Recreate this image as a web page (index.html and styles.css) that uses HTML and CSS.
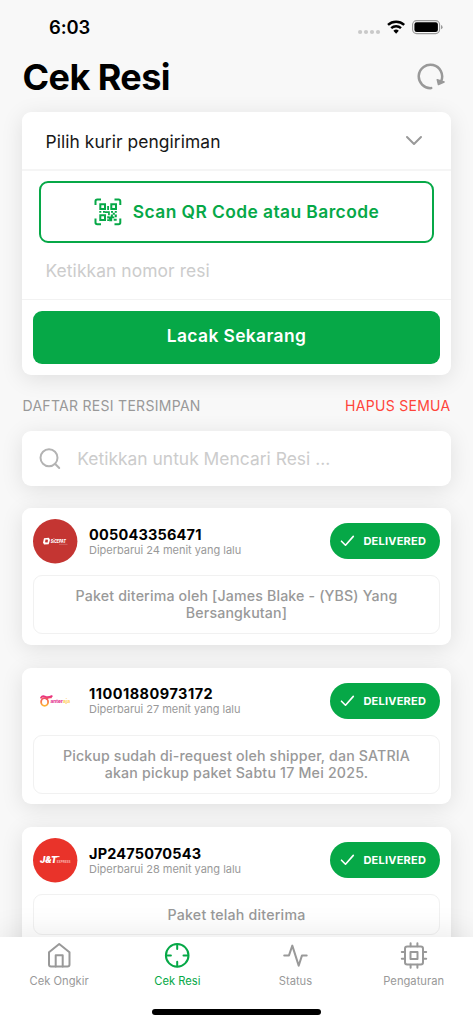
FILE: index.html
```html
<!DOCTYPE html>
<html lang="id">
<head>
<meta charset="utf-8">
<title>Cek Resi</title>
<link rel="stylesheet" href="styles.css">
</head>
<body>
<div class="screen">
  <header class="status-bar">
    <span class="clock">6:03</span>
    <svg class="system-icons" width="86" height="18" viewBox="0 0 86 18">
      <g fill="#c9c9c9"><circle cx="2.1" cy="14" r="2.1"/><circle cx="8" cy="14" r="2.1"/><circle cx="14" cy="14" r="2.1"/><circle cx="20" cy="14" r="2.1"/></g>
      <g fill="none" stroke="#000" stroke-width="2.4"><path d="M30 6.9a12 12 0 0 1 16.2 0"/><path d="M33.2 10.2a7.2 7.2 0 0 1 9.8 0"/></g>
      <path d="M35.4 12.7a4 4 0 0 1 5.4 0L38.1 15.8Z"/>
      <rect x="54.6" y="2.6" width="27" height="13" rx="4" fill="none" stroke="#999" stroke-width="1.1"/>
      <rect x="56.4" y="4.3" width="23.5" height="9.7" rx="2.3"/>
      <path d="M83 7v4.3q1.6-.6 1.6-2.15T83 7Z" fill="#999"/>
    </svg>
  </header>
  <div class="title-row">
    <h1>Cek Resi</h1>
    <svg width="28" height="28" viewBox="0 0 28 28" fill="none" stroke="#999" stroke-width="2.5" stroke-linecap="round" stroke-linejoin="round">
      <path d="M14.2 25.1A11.7 11.7 0 1 1 24.3 17.8"/><path d="M20.2 16.6l6.9 2.4-5.7 2.6z" fill="#999" stroke-width="1.4"/>
    </svg>
  </div>

  <section class="card form">
    <div class="courier"><span>Pilih kurir pengiriman</span>
      <svg width="18" height="12" viewBox="0 0 18 12" fill="none" stroke="#999" stroke-width="2" stroke-linecap="round" stroke-linejoin="round"><path d="M2 2l7 7 7-7"/></svg>
    </div>
    <div class="scan">
      <svg width="28" height="28" viewBox="0 0 28 28" fill="none" stroke="#06a847" stroke-width="2">
        <path d="M1.5 7V3.2q0-1.7 1.7-1.7H7M20.5 1.5h4.1q1.7 0 1.7 1.7V7M1.5 20.5v4.1q0 1.7 1.7 1.7H7M20.5 26.3h4.1q1.7 0 1.7-1.7v-4.1"/>
        <path d="M6.3 6.3h4.7V11H6.3zM17.3 6.3H22V11h-4.7zM6.3 17.3H11V22H6.3z"/>
        <path fill="#06a847" stroke="none" d="M13.2 8h1.8v4h-1.8zM5.3 13h2v1.8h-2zM9 13h2v1.8H9zM11 13.2h4.8v4h-1.7V15H11zM17 13h2v1.8h-2zM20.8 13h2v1.8h-2zM18.8 14.8h2v2h-2zM16.8 16.5h2.1v2h-2.1zM20.7 16.5h2.1v2.7h-2.1zM13.2 18.2h1.9v2.3h-1.9zM15 18.5h5.3v1.7h-2.1v3h-3.1v-2.3H15zM19.7 20.8h3v2h-3zM13.2 21.3H15v1.8h-1.8z"/>
      </svg>
      <span>Scan QR Code atau Barcode</span>
    </div>
    <div class="receipt"><span>Ketikkan nomor resi</span></div>
    <div class="track"><span>Lacak Sekarang</span></div>
  </section>

  <div class="section-head"><span class="saved">DAFTAR RESI TERSIMPAN</span><span class="clear">HAPUS SEMUA</span></div>

  <div class="card search">
    <svg width="22" height="22" viewBox="0 0 22 22" fill="none" stroke="#b3b3b3" stroke-width="2" stroke-linecap="round"><circle cx="10" cy="9.7" r="8.5"/><path d="M16.2 16l4 4"/></svg>
    <span>Ketikkan untuk Mencari Resi ...</span>
  </div>

  <main class="list">
    <article class="card parcel">
      <div class="parcel-head">
        <svg class="logo" viewBox="0 0 45 45"><circle cx="22.2" cy="22.2" r="22.2" fill="#c43532"/>
          <path d="M11 19.2l4.8-.5 1.2 2-1.3 4.5-4.7.2-1-2z" fill="#fff"/><path d="M12.5 20.5l2.5.3-.4 2.7-2.6-.2z" fill="#c43532"/>
          <text x="17.8" y="23.9" class="sicepat" textLength="15" lengthAdjust="spacingAndGlyphs">SiCEPAT</text><path d="M26 25.3h8.5" stroke="#d87978" stroke-width=".7"/></svg>
        <div class="meta"><span class="code code-a">005043356471</span><span class="updated">Diperbarui 24 menit yang lalu</span></div>
        <div class="badge"><svg width="15" height="12" viewBox="0 0 15 12"><path d="M1.5 6.2l4 4L13.3 1.4"/></svg><span>DELIVERED</span></div>
      </div>
      <div class="note"><span class="line-a">Paket diterima oleh [James Blake - (YBS) Yang</span><br><span class="line-b">Bersangkutan]</span></div>
    </article>
    <article class="card parcel">
      <div class="parcel-head">
        <svg class="logo" viewBox="0 0 45 45"><defs><linearGradient id="ribbon" gradientUnits="userSpaceOnUse" x1="0" y1="16" x2="0" y2="28"><stop stop-color="#e5208a"/><stop offset=".5" stop-color="#f7734e"/><stop offset="1" stop-color="#ffc42e"/></linearGradient></defs>
          <g fill="none" stroke="url(#ribbon)" stroke-width="1.8" stroke-linecap="round"><ellipse cx="11.6" cy="23" rx="3.5" ry="3.9"/><path d="M8 18.8q1.2-2.2 3.8-1.2 3 1.4 7-.5M13.6 20q1.5-1.8 4.4-1.6"/></g>
          <text x="17.5" y="24.2" class="anter" textLength="12.5" lengthAdjust="spacingAndGlyphs">anter</text><text x="30" y="24.2" class="aja" textLength="7" lengthAdjust="spacingAndGlyphs">aja</text></svg>
        <div class="meta"><span class="code code-b">11001880973172</span><span class="updated">Diperbarui 27 menit yang lalu</span></div>
        <div class="badge"><svg width="15" height="12" viewBox="0 0 15 12"><path d="M1.5 6.2l4 4L13.3 1.4"/></svg><span>DELIVERED</span></div>
      </div>
      <div class="note"><span class="line-c">Pickup sudah di-request oleh shipper, dan SATRIA</span><br><span class="line-d">akan pickup paket Sabtu 17 Mei 2025.</span></div>
    </article>
    <article class="card parcel">
      <div class="parcel-head">
        <svg class="logo" viewBox="0 0 45 45"><circle cx="22.2" cy="22.2" r="22.2" fill="#e9332a"/>
          <text x="7" y="24.6" class="jt" textLength="17" lengthAdjust="spacingAndGlyphs">J&amp;T</text><path d="M19.5 18.6h7" stroke="#fff"/><text x="23.8" y="24.5" class="express" textLength="13.7" lengthAdjust="spacingAndGlyphs">EXPRESS</text></svg>
        <div class="meta"><span class="code code-c">JP2475070543</span><span class="updated">Diperbarui 28 menit yang lalu</span></div>
        <div class="badge"><svg width="15" height="12" viewBox="0 0 15 12"><path d="M1.5 6.2l4 4L13.3 1.4"/></svg><span>DELIVERED</span></div>
      </div>
      <div class="note"><span class="line-e">Paket telah diterima</span></div>
    </article>
  </main>

  <nav class="tabs">
    <div class="tab"><svg width="28" height="28" viewBox="0 0 28 28"><path d="M4 10.2L14.2 2l10.3 8.2V22.5q0 2-2 2H6q-2 0-2-2z"/><path d="M10.7 24.5V13.3h7v11.2"/></svg><span>Cek Ongkir</span></div>
    <div class="tab active"><svg width="28" height="28" viewBox="0 0 28 28"><circle cx="14.2" cy="13.4" r="11.3"/><path d="M14.2 2.5v4.6M14.2 19.7v4.6M3.3 13.4h4.6M20.5 13.4h4.6"/></svg><span>Cek Resi</span></div>
    <div class="tab"><svg width="28" height="28" viewBox="0 0 28 28"><path d="M3.2 13.4h4.8l3.3-9.8 6.4 20 3.3-10.2h4.7"/></svg><span>Status</span></div>
    <div class="tab"><svg width="28" height="28" viewBox="0 0 28 28"><rect x="5" y="4.5" width="18" height="18" rx="2.2"/><rect x="10.5" y="10" width="7" height="7"/><path d="M10.6 1.2v3M17.4 1.2v3M10.6 22.8v3M17.4 22.8v3M1.8 10.1h3M1.8 16.7h3M23.2 10.1h3M23.2 16.7h3"/></svg><span>Pengaturan</span></div>
    <div class="home-indicator"></div>
  </nav>
</div>
</body>
</html>
```
FILE: styles.css
```css
* { box-sizing: border-box; }
body { margin: 0; }
.screen {
  width: 473px; height: 1024px; overflow: hidden;
  display: flex; flex-direction: column;
  background: #f8f8f8; color: #000;
  font-family: Inter, sans-serif; position: relative;
}
span { white-space: nowrap; }
.status-bar { height: 54px; flex: none; display: flex; justify-content: space-between; padding: 16px 29px 0 49px; }
.clock { font-size: 18.4px; line-height: 23px; font-weight: 600; letter-spacing: -0.1px; }
.system-icons { margin-top: 2px; }
.title-row { height: 58px; flex: none; display: flex; justify-content: space-between; align-items: flex-start; padding: 0 28px 0 22.5px; }
.title-row svg { margin-top: 9px; }
h1 { margin: 0; font-size: 36px; line-height: 46px; font-weight: 700; letter-spacing: -0.57px; }
.card { background: #fff; border-radius: 9px; box-shadow: 0 4px 22px rgba(0,0,0,.1); margin: 0 22.3px; flex: none; }
.form { height: 263px; }
.courier { height: 59px; border-bottom: 2px solid #f5f5f5; display: flex; align-items: center; justify-content: space-between; padding: 1px 28px 0 23.2px; font-size: 17.4px; letter-spacing: 0.07px; }
.courier span { color: #171717; }
.scan { height: 62px; margin: 10px 16.5px 0; border: 2px solid #06a847; border-radius: 9px; display: flex; align-items: center; justify-content: center; gap: 11px; color: #06a847; font-size: 17.4px; font-weight: 600; letter-spacing: 0.42px; }
.scan span { margin-top: -2px; }
.receipt { height: 56.5px; border-bottom: 1px solid #f2f2f2; padding: 0 23.2px; color: #ccc; font-size: 17.4px; line-height: 55px; letter-spacing: 0.09px; }
.track { margin: 11px 11px 0; height: 53px; background: #06a847; border-radius: 9px; color: #fff; font-size: 17.4px; font-weight: 600; line-height: 50px; text-align: center; letter-spacing: 0.38px; }
.section-head { height: 56px; flex: none; display: flex; justify-content: space-between; align-items: center; padding: 5px 22.5px 0; font-size: 14px; letter-spacing: 0.29px; }
.saved { color: #999; }
.clear { color: #ff443a; }
.search { height: 55px; display: flex; align-items: center; padding: 0 17px; gap: 16px; font-size: 17.4px; color: #ccc; letter-spacing: 0.02px; }
.list { display: flex; flex-direction: column; gap: 22.8px; margin-top: 22px; }
.parcel { height: 136.8px; padding: 11px; }
.parcel:last-child { height: 140px; }
.parcel-head { display: flex; height: 45px; align-items: center; }
.logo { width: 45px; height: 45px; }
.meta { display: flex; flex-direction: column; flex: 1; margin: -1px 0 0 10.7px; }
.code { font-size: 14.5px; line-height: 18px; font-weight: 700; }
.code-a { letter-spacing: 0.2px; }
.code-b { letter-spacing: 0.48px; }
.code-c { letter-spacing: 0.18px; }
.updated { font-size: 11px; line-height: 13px; color: #999; letter-spacing: -0.02px; }
.badge { width: 110px; height: 36px; margin-top: -1px; border-radius: 18px; background: #06a847; color: #fff; display: flex; align-items: center; font-size: 11px; font-weight: 700; padding-left: 10.7px; gap: 8px; letter-spacing: 0.22px; }
.badge path { fill: none; stroke: #fff; stroke-width: 1.6; stroke-linecap: round; stroke-linejoin: round; }
.note { margin-top: 11px; height: 59px; border: 1px solid #f1f1f1; border-radius: 9px; text-align: center; color: #999; font-size: 14.2px; line-height: 17px; font-weight: 500; padding-top: 11px; letter-spacing: 0.15px; }
.line-d, .line-e { letter-spacing: 0.2px; }
.parcel:last-child .note { height: 41px; }
.sicepat { font: italic 800 4.6px Inter, sans-serif; fill: #fff; }
.anter { font: 700 4.7px Inter, sans-serif; fill: #e1248b; }
.aja { font: 700 4.7px Inter, sans-serif; fill: #ffcb50; }
.jt { font: italic 900 8.8px Inter, sans-serif; fill: #fff; }
.express { font: 700 3.8px Inter, sans-serif; fill: #f8b6b1; }
.tabs { position: absolute; inset: auto 0 0 0; height: 87px; background: #fff; display: grid; grid-template-columns: repeat(4, 118.2px); box-shadow: 0 -5px 30px rgba(0,0,0,.08); }
.tab { display: flex; flex-direction: column; align-items: center; padding-top: 5px; color: #999; font-size: 11.2px; line-height: 14px; }
.tab svg { margin-bottom: 3.5px; fill: none; stroke: currentColor; stroke-width: 2; stroke-linecap: round; stroke-linejoin: round; }
.active { color: #06a847; }
.home-indicator { position: absolute; left: 152px; bottom: 9px; width: 169px; height: 6px; border-radius: 3px; background: #000; }
```
